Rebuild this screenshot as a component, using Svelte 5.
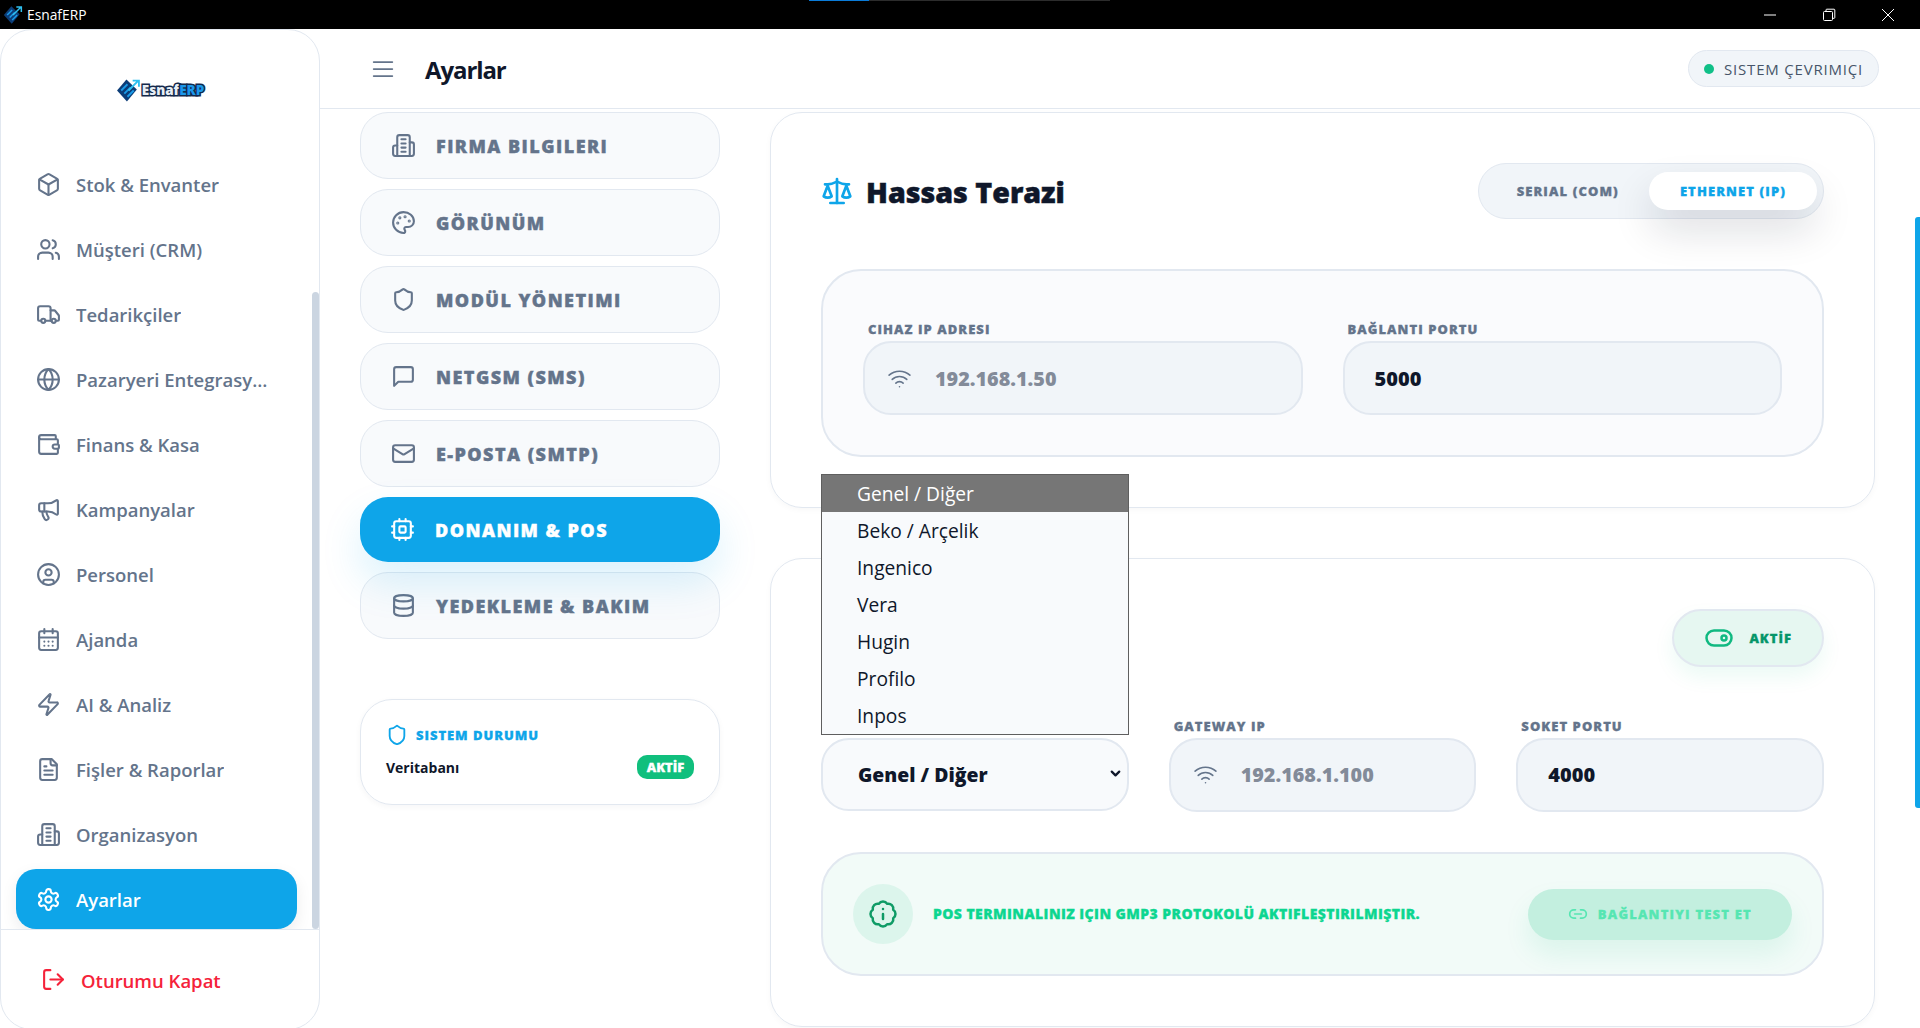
<script>
  // lucide style outlines, stroke drawn by the svg wrapper
  const icons = {
    box: '<path d="M21 8a2 2 0 0 0-1-1.73l-7-4a2 2 0 0 0-2 0l-7 4A2 2 0 0 0 3 8v8a2 2 0 0 0 1 1.73l7 4a2 2 0 0 0 2 0l7-4A2 2 0 0 0 21 16Z"/><path d="m3.3 7 8.7 5 8.7-5"/><path d="M12 22V12"/>',
    users: '<path d="M16 21v-2a4 4 0 0 0-4-4H6a4 4 0 0 0-4 4v2"/><circle cx="9" cy="7" r="4"/><path d="M22 21v-2a4 4 0 0 0-3-3.87"/><path d="M16 3.13a4 4 0 0 1 0 7.75"/>',
    truck: '<path d="M14 18V6a2 2 0 0 0-2-2H4a2 2 0 0 0-2 2v11a1 1 0 0 0 1 1h2"/><path d="M15 18H9"/><path d="M19 18h2a1 1 0 0 0 1-1v-3.65a1 1 0 0 0-.22-.624l-3.48-4.35A1 1 0 0 0 17.52 8H14"/><circle cx="17" cy="18" r="2"/><circle cx="7" cy="18" r="2"/>',
    globe: '<circle cx="12" cy="12" r="10"/><path d="M12 2a14.5 14.5 0 0 0 0 20 14.5 14.5 0 0 0 0-20"/><path d="M2 12h20"/>',
    wallet: '<path d="M19 7V4a1 1 0 0 0-1-1H5a2 2 0 0 0 0 4h15a1 1 0 0 1 1 1v4h-3a2 2 0 0 0 0 4h3a1 1 0 0 0 1-1v-2a1 1 0 0 0-1-1"/><path d="M3 5v14a2 2 0 0 0 2 2h15a1 1 0 0 0 1-1v-4"/>',
    megaphone: '<path d="M11 6a13 13 0 0 0 8.4-2.8A1 1 0 0 1 21 4v12a1 1 0 0 1-1.6.8A13 13 0 0 0 11 14H5a2 2 0 0 1-2-2V8a2 2 0 0 1 2-2z"/><path d="M6 14a12 12 0 0 0 2.4 7.2 2 2 0 0 0 3.2-2.4A8 8 0 0 1 10 14"/><path d="M8 6v8"/>',
    userCircle: '<circle cx="12" cy="12" r="10"/><circle cx="12" cy="10" r="3"/><path d="M7 20.662V19a2 2 0 0 1 2-2h6a2 2 0 0 1 2 2v1.662"/>',
    calendar: '<path d="M8 2v4"/><path d="M16 2v4"/><rect width="18" height="18" x="3" y="4" rx="2"/><path d="M3 10h18"/><path d="M8 14h.01"/><path d="M12 14h.01"/><path d="M16 14h.01"/><path d="M8 18h.01"/><path d="M12 18h.01"/><path d="M16 18h.01"/>',
    zap: '<path d="M4 14a1 1 0 0 1-.78-1.63l9.9-10.2a.5.5 0 0 1 .86.46l-1.92 6.02A1 1 0 0 0 13 10h7a1 1 0 0 1 .78 1.63l-9.9 10.2a.5.5 0 0 1-.86-.46l1.92-6.02A1 1 0 0 0 11 14z"/>',
    file: '<path d="M15 2H6a2 2 0 0 0-2 2v16a2 2 0 0 0 2 2h12a2 2 0 0 0 2-2V7Z"/><path d="M14 2v4a2 2 0 0 0 2 2h4"/><path d="M10 9H8"/><path d="M16 13H8"/><path d="M16 17H8"/>',
    building: '<path d="M6 22V4a2 2 0 0 1 2-2h8a2 2 0 0 1 2 2v18Z"/><path d="M6 12H4a2 2 0 0 0-2 2v6a2 2 0 0 0 2 2h2"/><path d="M18 9h2a2 2 0 0 1 2 2v9a2 2 0 0 1-2 2h-2"/><path d="M10 6h4"/><path d="M10 10h4"/><path d="M10 14h4"/><path d="M10 18h4"/>',
    settings: '<path d="M12.22 2h-.44a2 2 0 0 0-2 2v.18a2 2 0 0 1-1 1.73l-.43.25a2 2 0 0 1-2 0l-.15-.08a2 2 0 0 0-2.73.73l-.22.38a2 2 0 0 0 .73 2.73l.15.1a2 2 0 0 1 1 1.72v.51a2 2 0 0 1-1 1.74l-.15.09a2 2 0 0 0-.73 2.73l.22.38a2 2 0 0 0 2.73.73l.15-.08a2 2 0 0 1 2 0l.43.25a2 2 0 0 1 1 1.73V20a2 2 0 0 0 2 2h.44a2 2 0 0 0 2-2v-.18a2 2 0 0 1 1-1.73l.43-.25a2 2 0 0 1 2 0l.15.08a2 2 0 0 0 2.73-.73l.22-.39a2 2 0 0 0-.73-2.73l-.15-.08a2 2 0 0 1-1-1.74v-.5a2 2 0 0 1 1-1.74l.15-.09a2 2 0 0 0 .73-2.73l-.22-.38a2 2 0 0 0-2.73-.73l-.15.08a2 2 0 0 1-2 0l-.43-.25a2 2 0 0 1-1-1.73V4a2 2 0 0 0-2-2z"/><circle cx="12" cy="12" r="3"/>',
    logout: '<path d="M9 21H5a2 2 0 0 1-2-2V5a2 2 0 0 1 2-2h4"/><path d="m16 17 5-5-5-5"/><path d="M21 12H9"/>',
    menu: '<path d="M4 12h16"/><path d="M4 6h16"/><path d="M4 18h16"/>',
    palette: '<circle cx="13.5" cy="6.5" r=".5" fill="currentColor"/><circle cx="17.5" cy="10.5" r=".5" fill="currentColor"/><circle cx="8.5" cy="7.5" r=".5" fill="currentColor"/><circle cx="6.5" cy="12.5" r=".5" fill="currentColor"/><path d="M12 2C6.5 2 2 6.5 2 12s4.5 10 10 10c.926 0 1.648-.746 1.648-1.688 0-.437-.18-.835-.437-1.125-.29-.289-.438-.652-.438-1.125a1.64 1.64 0 0 1 1.668-1.668h1.996c3.051 0 5.555-2.503 5.555-5.554C21.965 6.012 17.461 2 12 2z"/>',
    shield: '<path d="M20 13c0 5-3.5 7.5-7.66 8.95a1 1 0 0 1-.67-.01C7.5 20.5 4 18 4 13V6a1 1 0 0 1 1-1c2 0 4.5-1.2 6.24-2.72a1.17 1.17 0 0 1 1.52 0C14.51 3.81 17 5 19 5a1 1 0 0 1 1 1z"/>',
    message: '<path d="M21 15a2 2 0 0 1-2 2H7l-4 4V5a2 2 0 0 1 2-2h14a2 2 0 0 1 2 2z"/>',
    mail: '<rect width="20" height="16" x="2" y="4" rx="2"/><path d="m22 7-8.97 5.7a1.94 1.94 0 0 1-2.06 0L2 7"/>',
    cpu: '<rect width="16" height="16" x="4" y="4" rx="2"/><rect width="6" height="6" x="9" y="9" rx="1"/><path d="M15 2v2"/><path d="M15 20v2"/><path d="M2 15h2"/><path d="M2 9h2"/><path d="M20 15h2"/><path d="M20 9h2"/><path d="M9 2v2"/><path d="M9 20v2"/>',
    database: '<ellipse cx="12" cy="5" rx="9" ry="3"/><path d="M3 5V19A9 3 0 0 0 21 19V5"/><path d="M3 12A9 3 0 0 0 21 12"/>',
    scale: '<path d="m16 16 3-8 3 8c-.87.65-1.92 1-3 1s-2.13-.35-3-1Z"/><path d="m2 16 3-8 3 8c-.87.65-1.92 1-3 1s-2.13-.35-3-1Z"/><path d="M7 21h10"/><path d="M12 3v18"/><path d="M3 7h2c2 0 5-1 7-2 2 1 5 2 7 2h2"/>',
    wifi: '<path d="M12 20h.01"/><path d="M2 8.82a15 15 0 0 1 20 0"/><path d="M5 12.859a10 10 0 0 1 14 0"/><path d="M8.5 16.429a5 5 0 0 1 7 0"/>',
    toggle: '<rect width="20" height="12" x="2" y="6" rx="6"/><circle cx="16" cy="12" r="2"/>',
    badgeInfo: '<path d="M3.85 8.62a4 4 0 0 1 4.78-4.77 4 4 0 0 1 6.74 0 4 4 0 0 1 4.78 4.78 4 4 0 0 1 0 6.74 4 4 0 0 1-4.77 4.78 4 4 0 0 1-6.75 0 4 4 0 0 1-4.78-4.77 4 4 0 0 1 0-6.76Z"/><path d="M12 16v-4"/><path d="M12 8h.01"/>',
    link: '<path d="M9 17H7A5 5 0 0 1 7 7h2"/><path d="M15 7h2a5 5 0 1 1 0 10h-2"/><path d="M8 12h8"/>',
    chevron: '<path d="m6 9 6 6 6-6"/>'
  };

  const navItems = [
    { icon: "box", label: "Stok & Envanter" },
    { icon: "users", label: "Müşteri (CRM)" },
    { icon: "truck", label: "Tedarikçiler" },
    { icon: "globe", label: "Pazaryeri Entegrasyonu" },
    { icon: "wallet", label: "Finans & Kasa" },
    { icon: "megaphone", label: "Kampanyalar" },
    { icon: "userCircle", label: "Personel" },
    { icon: "calendar", label: "Ajanda" },
    { icon: "zap", label: "AI & Analiz" },
    { icon: "file", label: "Fişler & Raporlar" },
    { icon: "building", label: "Organizasyon" },
    { icon: "settings", label: "Ayarlar", active: true }
  ];

  const tabs = [
    { icon: "building", label: "FIRMA BILGILERI" },
    { icon: "palette", label: "GÖRÜNÜM" },
    { icon: "shield", label: "MODÜL YÖNETIMI" },
    { icon: "message", label: "NETGSM (SMS)" },
    { icon: "mail", label: "E-POSTA (SMTP)" },
    { icon: "cpu", label: "DONANIM & POS", active: true },
    { icon: "database", label: "YEDEKLEME & BAKIM" }
  ];

  const brands = ["Genel / Diğer", "Beko / Arçelik", "Ingenico", "Vera", "Hugin", "Profilo", "Inpos"];
</script>

{#snippet icon(name, size = 25, sw = 2)}
  <svg class="ico" width={size} height={size} viewBox="0 0 24 24" fill="none" stroke="currentColor" stroke-width={sw} stroke-linecap="round" stroke-linejoin="round">{@html icons[name]}</svg>
{/snippet}

{#snippet mark(size)}
  <svg width={size} height={size} viewBox="0 0 24 24" fill="none">
    <path d="M10 1.5 20 11l-9.5 11.5L1 12z" fill="#0c3d78" />
    <path d="M5 12l6-6M8 15l6-6M11 18l6-6" stroke="#1b9be8" stroke-width="1.8" />
    <path d="M12 12l9-9M16 2.5h6v6" stroke="#2fc0f0" stroke-width="1.8" />
  </svg>
{/snippet}

<div class="window">
  <div class="titlebar">
    <div class="app-name">{@render mark(20)}<span>EsnafERP</span></div>
    <div class="load"><i></i></div>
    <div class="controls">
      <svg width="14" height="14" viewBox="0 0 14 14"><path d="M1 7h12" stroke="#fff" /></svg>
      <svg width="14" height="14" viewBox="0 0 14 14" fill="none" stroke="#fff"><rect x="1.5" y="3.5" width="9" height="9" rx="1" /><path d="M4 3.5V2a.8.8 0 0 1 .8-.8h7.2a.8.8 0 0 1 .8.8v7.5a.8.8 0 0 1-.8.8h-1.5" /></svg>
      <svg width="14" height="14" viewBox="0 0 14 14"><path d="M1 1l12 12M13 1 1 13" stroke="#fff" /></svg>
    </div>
  </div>

  <div class="body">
    <aside class="sidebar">
      <div class="logo">
        {@render mark(25)}
        <span class="logo-text">Esnaf<b>ERP</b></span>
      </div>
      <nav>
        {#each navItems as item}
          <a class="nav-item" class:active={item.active} href="#top">
            {@render icon(item.icon)}
            <span>{item.label}</span>
          </a>
        {/each}
        <div class="side-thumb"></div>
      </nav>
      <div class="side-foot">
        <a class="logout" href="#top">
          {@render icon("logout")}
          <span>Oturumu Kapat</span>
        </a>
      </div>
    </aside>

    <div class="page">
      <header>
        <button class="burger" aria-label="Menü">{@render icon("menu", 28, 1.5)}</button>
        <h1>Ayarlar</h1>
        <div class="online"><i></i>SISTEM ÇEVRIMIÇI</div>
      </header>

      <div class="content">
        <div class="side-col">
          {#each tabs as t}
            <button class="tab" class:active={t.active}>
              {@render icon(t.icon)}
              <span>{t.label}</span>
            </button>
          {/each}

          <div class="status">
            <div class="status-head">{@render icon("shield", 22)}<span>SISTEM DURUMU</span></div>
            <div class="status-row">
              <span>Veritabanı</span>
              <em>AKTİF</em>
            </div>
          </div>
        </div>

        <div class="main-col">
          <section class="card">
            <div class="card-head">
              <h2><span class="scale">{@render icon("scale", 32)}</span>Hassas Terazi</h2>
              <div class="seg">
                <button>SERIAL (COM)</button>
                <button class="on">ETHERNET (IP)</button>
              </div>
            </div>
            <div class="panel two">
              <div class="field">
                <span class="lbl">CIHAZ IP ADRESI</span>
                <div class="inp muted"><span class="wifi">{@render icon("wifi", 25, 1.5)}</span>192.168.1.50</div>
              </div>
              <div class="field">
                <span class="lbl">BAĞLANTI PORTU</span>
                <div class="inp">5000</div>
              </div>
            </div>
          </section>

          <section class="card">
            <div class="card-head end">
              <button class="state">{@render icon("toggle", 30)}<span>AKTİF</span></button>
            </div>
            <div class="three">
              <div class="field has-menu">
                <div class="inp select">Genel / Diğer <span class="chev">{@render icon("chevron", 15, 3.6)}</span></div>
                <ul class="menu">
                  {#each brands as b, i}
                    <li class:sel={i === 0}>{b}</li>
                  {/each}
                </ul>
              </div>
              <div class="field">
                <span class="lbl">GATEWAY IP</span>
                <div class="inp muted"><span class="wifi">{@render icon("wifi", 25, 1.5)}</span>192.168.1.100</div>
              </div>
              <div class="field">
                <span class="lbl">SOKET PORTU</span>
                <div class="inp">4000</div>
              </div>
            </div>
            <div class="banner">
              <span class="info">{@render icon("badgeInfo", 30)}</span>
              <p>POS TERMINALINIZ IÇIN GMP3 PROTOKOLÜ AKTIFLEŞTIRILMIŞTIR.</p>
              <button class="test">{@render icon("link", 20)}<span>BAĞLANTIYI TEST ET</span></button>
            </div>
          </section>
        </div>
      </div>
      <div class="page-thumb"></div>
    </div>
  </div>
</div>

<style>
  :global(body) {
    margin: 0;
    background: #fff;
    font-family: "Open Sans", "Noto Sans", sans-serif;
    color: #0f172a;
  }

  .window {
    height: 1028px;
    overflow: hidden;
    display: flex;
    flex-direction: column;
  }

  button {
    font: inherit;
    cursor: pointer;
  }

  .ico {
    flex: none;
    display: block;
  }

  /* window chrome */
  .titlebar {
    height: 29px;
    flex: none;
    background: #000;
    color: #fff;
    display: flex;
    align-items: center;
    position: relative;
  }

  .app-name {
    display: flex;
    align-items: center;
    gap: 4px;
    padding-left: 3px;
    font-size: 13.8px;
  }

  .load {
    position: absolute;
    left: 809px;
    top: 0;
    width: 301px;
    height: 1px;
    background: #2c2c2c;
  }

  .load i {
    display: block;
    width: 60px;
    height: 1px;
    background: #0a7bd8;
  }

  .controls {
    margin-left: auto;
    display: flex;
    gap: 45px;
    padding-right: 25px;
  }

  .body {
    flex: 1;
    display: flex;
    min-height: 0;
  }

  /* sidebar */
  .sidebar {
    width: 320px;
    height: 1001px;
    flex: none;
    box-sizing: border-box;
    border: 1px solid #e2e8f0;
    border-radius: 32px;
    display: flex;
    flex-direction: column;
    overflow: hidden;
  }

  .logo {
    height: 124px;
    flex: none;
    display: flex;
    align-items: flex-start;
    justify-content: center;
    padding: 48px 0 0;
    box-sizing: border-box;
    gap: 1px;
  }

  .logo-text {
    font-size: 13.5px;
    font-weight: 800;
    color: #e8eef5;
    -webkit-text-stroke: 3px #13294b;
    paint-order: stroke fill;
    line-height: 25px;
  }

  .logo-text b {
    color: #1b97ea;
    font-weight: 800;
  }

  nav {
    flex: 1;
    min-height: 0;
    position: relative;
    display: flex;
    flex-direction: column;
    gap: 5px;
    padding: 0 0 0 15px;
    overflow: hidden;
  }

  .nav-item {
    height: 60px;
    width: 281px;
    flex: none;
    box-sizing: border-box;
    display: flex;
    align-items: center;
    gap: 15px;
    padding: 0 24px 0 20px;
    border-radius: 20px;
    text-decoration: none;
    color: #64748b;
    font-size: 18.5px;
    font-weight: 600;
  }

  .nav-item span {
    padding-top: 1px;
    white-space: nowrap;
    overflow: hidden;
    text-overflow: ellipsis;
  }

  .nav-item.active {
    background: #0ea5e9;
    color: #fff;
    box-shadow: 0 6px 16px rgba(15, 23, 42, 0.08);
  }

  .side-thumb {
    position: absolute;
    right: 0;
    top: 138px;
    bottom: 0;
    width: 7px;
    border-radius: 4px;
    background: #cbd5e1;
  }

  .side-foot {
    flex: none;
    height: 100px;
    border-top: 1px solid #e2e8f0;
    display: flex;
    align-items: center;
    padding-left: 40px;
    box-sizing: border-box;
  }

  .logout {
    display: flex;
    align-items: center;
    gap: 15px;
    color: #f5223a;
    text-decoration: none;
    font-size: 18.5px;
    font-weight: 600;
  }

  .logout span {
    padding-top: 1px;
  }

  /* top bar */
  .page {
    flex: 1;
    min-width: 0;
    position: relative;
    display: flex;
    flex-direction: column;
  }

  header {
    height: 80px;
    flex: none;
    box-sizing: border-box;
    border-bottom: 1px solid #e2e8f0;
    display: flex;
    align-items: center;
    padding: 0 41px 0 49px;
  }

  .burger {
    border: 0;
    background: none;
    padding: 0;
    color: #64748b;
    margin-right: 28px;
  }

  h1 {
    margin: 2px 0 0;
    font-size: 24px;
    font-weight: 700;
    letter-spacing: -1.1px;
  }

  .online {
    margin-left: auto;
    height: 37px;
    box-sizing: border-box;
    border: 1px solid #e2e8f0;
    background: #f1f5f9;
    border-radius: 19px;
    padding: 0 15px;
    display: flex;
    align-items: center;
    gap: 10px;
    font-size: 15px;
    color: #475569;
    letter-spacing: 0.8px;
  }

  .online i {
    width: 10px;
    height: 10px;
    border-radius: 50%;
    background: #10c088;
  }

  /* content */
  .content {
    flex: 1;
    min-height: 0;
    display: flex;
    gap: 50px;
    padding: 3px 45px 0 40px;
  }

  .side-col {
    width: 360px;
    flex: none;
    display: flex;
    flex-direction: column;
    gap: 10px;
  }

  .tab {
    display: flex;
    align-items: center;
    gap: 20px;
    box-sizing: border-box;
    height: 67px;
    padding: 0 30px;
    border: 1px solid #e2e8f0;
    border-radius: 28px;
    background: #f8fafc;
    color: #64748b;
    font-size: 18px;
    font-weight: 800;
    -webkit-text-stroke: 0.4px currentColor;
    letter-spacing: 1.45px;
    white-space: nowrap;
  }

  .tab.active {
    height: 65px;
    border: 0;
    background: #0ea5e9;
    color: #fff;
    position: relative;
    z-index: 1;
    box-shadow: 0 20px 40px rgba(14, 165, 233, 0.15);
  }

  .status {
    margin-top: 50px;
    border: 1px solid #e2e8f0;
    border-radius: 32px;
    padding: 24px 25px 25px;
    box-shadow: 0 2px 6px rgba(15, 23, 42, 0.04);
  }

  .status-head {
    display: flex;
    align-items: center;
    gap: 8px;
    height: 22px;
    color: #0ea5e9;
    font-size: 13px;
    font-weight: 800;
    -webkit-text-stroke: 0.3px currentColor;
    letter-spacing: 0.95px;
  }

  .status-row {
    display: flex;
    align-items: center;
    justify-content: space-between;
    margin-top: 9px;
    height: 24px;
    font-size: 14px;
    font-weight: 700;
  }

  .status-row em {
    font-style: normal;
    background: #10bf7d;
    color: #fff;
    border-radius: 10px;
    height: 24px;
    line-height: 24px;
    width: 57px;
    text-align: center;
    font-size: 13px;
    font-weight: 800;
    -webkit-text-stroke: 0.3px currentColor;
  }

  .main-col {
    flex: 1;
    min-width: 0;
    display: flex;
    flex-direction: column;
    gap: 50px;
  }

  .card {
    border: 1px solid #e2e8f0;
    border-radius: 32px;
    padding: 50px;
    box-shadow: 0 2px 6px rgba(15, 23, 42, 0.03);
  }

  .card-head {
    display: flex;
    align-items: center;
    justify-content: space-between;
    min-height: 56px;
    margin-bottom: 50px;
  }

  .card-head.end {
    justify-content: flex-end;
    margin-bottom: 40.5px;
  }

  h2 {
    margin: 0;
    display: flex;
    align-items: center;
    gap: 13px;
    font-size: 28.6px;
    font-weight: 800;
    -webkit-text-stroke: 0.5px currentColor;
  }

  .scale {
    color: #0ea5e9;
    -webkit-text-stroke: 0;
  }

  .seg {
    display: flex;
    height: 56px;
    box-sizing: border-box;
    padding: 8px 6px 8px 8px;
    border: 1px solid #e2e8f0;
    border-radius: 28px;
    background: #f1f5f9;
  }

  .seg button {
    border: 0;
    background: none;
    border-radius: 20px;
    padding: 0 30px;
    font-size: 13px;
    font-weight: 800;
    -webkit-text-stroke: 0.3px currentColor;
    letter-spacing: 1.1px;
    color: #64748b;
    white-space: nowrap;
  }

  .seg .on {
    background: #fff;
    color: #0ea5e9;
    padding: 0 31px;
    box-shadow: 0 20px 40px rgba(15, 23, 42, 0.14);
  }

  .panel {
    border: 2px solid #e2e8f0;
    border-radius: 40px;
    background: #fafbfd;
    padding: 40px;
  }

  .two {
    display: grid;
    grid-template-columns: 1fr 1fr;
    gap: 40px;
  }

  .three {
    display: grid;
    grid-template-columns: 1fr 1fr 1fr;
    gap: 40px;
    align-items: end;
  }

  .field {
    min-width: 0;
  }

  .lbl {
    display: block;
    padding: 10px 0 0 5px;
    margin-bottom: 4px;
    font-size: 13px;
    line-height: 16px;
    font-weight: 800;
    -webkit-text-stroke: 0.3px currentColor;
    letter-spacing: 1.05px;
    color: #64748b;
  }

  .inp {
    height: 74px;
    box-sizing: border-box;
    border: 2px solid #e2e8f0;
    border-radius: 28px;
    background: #f1f5f9;
    display: flex;
    align-items: center;
    padding-left: 30px;
    font-size: 20px;
    font-weight: 800;
    color: #0f172a;
  }

  .inp.muted {
    color: #838b99;
    padding-left: 22px;
    font-size: 19.8px;
  }

  .wifi {
    color: #64748b;
    margin-right: 23px;
  }

  .select {
    height: 73px;
    margin-bottom: 1px;
    background: #f8fafc;
    padding: 1px 0 0 35px;
    position: relative;
    font-size: 19.4px;
  }

  .chev {
    position: absolute;
    right: 4px;
    top: 26px;
    color: #0f172a;
  }

  .has-menu {
    position: relative;
  }

  .menu {
    position: absolute;
    left: 0;
    right: 0;
    bottom: 77px;
    margin: 0;
    padding: 0;
    list-style: none;
    border: 1px solid #5f5f5f;
    background: #f8fafc;
    font-size: 19.2px;
    color: #0f172a;
  }

  .menu li {
    height: 37px;
    line-height: 37px;
    padding-left: 35px;
  }

  .menu .sel {
    background: #767676;
    color: #fff;
  }

  .state {
    height: 58px;
    box-sizing: border-box;
    border: 2px solid #e2e8f0;
    border-radius: 29px;
    background: #e6f7f1;
    display: flex;
    align-items: center;
    gap: 15px;
    padding: 0 30px 0 30px;
    color: #10b981;
    box-shadow: 0 10px 20px rgba(16, 185, 129, 0.08);
  }

  .state span {
    color: #059669;
    font-size: 13px;
    font-weight: 800;
    -webkit-text-stroke: 0.3px currentColor;
    letter-spacing: 1px;
  }

  .banner {
    margin-top: 40.5px;
    height: 124px;
    box-sizing: border-box;
    border: 2px solid #e2e8f0;
    border-radius: 40px;
    background: #f2fbf8;
    padding: 0 30px;
    display: flex;
    align-items: center;
    gap: 20px;
  }

  .info {
    width: 60px;
    height: 60px;
    flex: none;
    border-radius: 50%;
    background: #dcf5ec;
    color: #0f9b66;
    display: flex;
    align-items: center;
    justify-content: center;
  }

  .banner p {
    margin: 0 0 2px;
    flex: 1;
    color: #0dd690;
    font-size: 14px;
    font-weight: 800;
    -webkit-text-stroke: 0.3px currentColor;
    letter-spacing: 0.42px;
    white-space: nowrap;
  }

  .test {
    height: 51px;
    border: 0;
    border-radius: 26px;
    background: #c3efdf;
    color: #56e6b2;
    display: flex;
    align-items: center;
    gap: 10px;
    padding: 0 40px;
    font-size: 13px;
    font-weight: 800;
    -webkit-text-stroke: 0.3px currentColor;
    letter-spacing: 1.2px;
    white-space: nowrap;
    box-shadow: 0 14px 26px rgba(16, 185, 129, 0.1);
  }

  .page-thumb {
    position: absolute;
    right: 0;
    top: 188px;
    width: 5px;
    height: 591px;
    border-radius: 3px 0 0 3px;
    background: #0ea5e9;
  }
</style>
